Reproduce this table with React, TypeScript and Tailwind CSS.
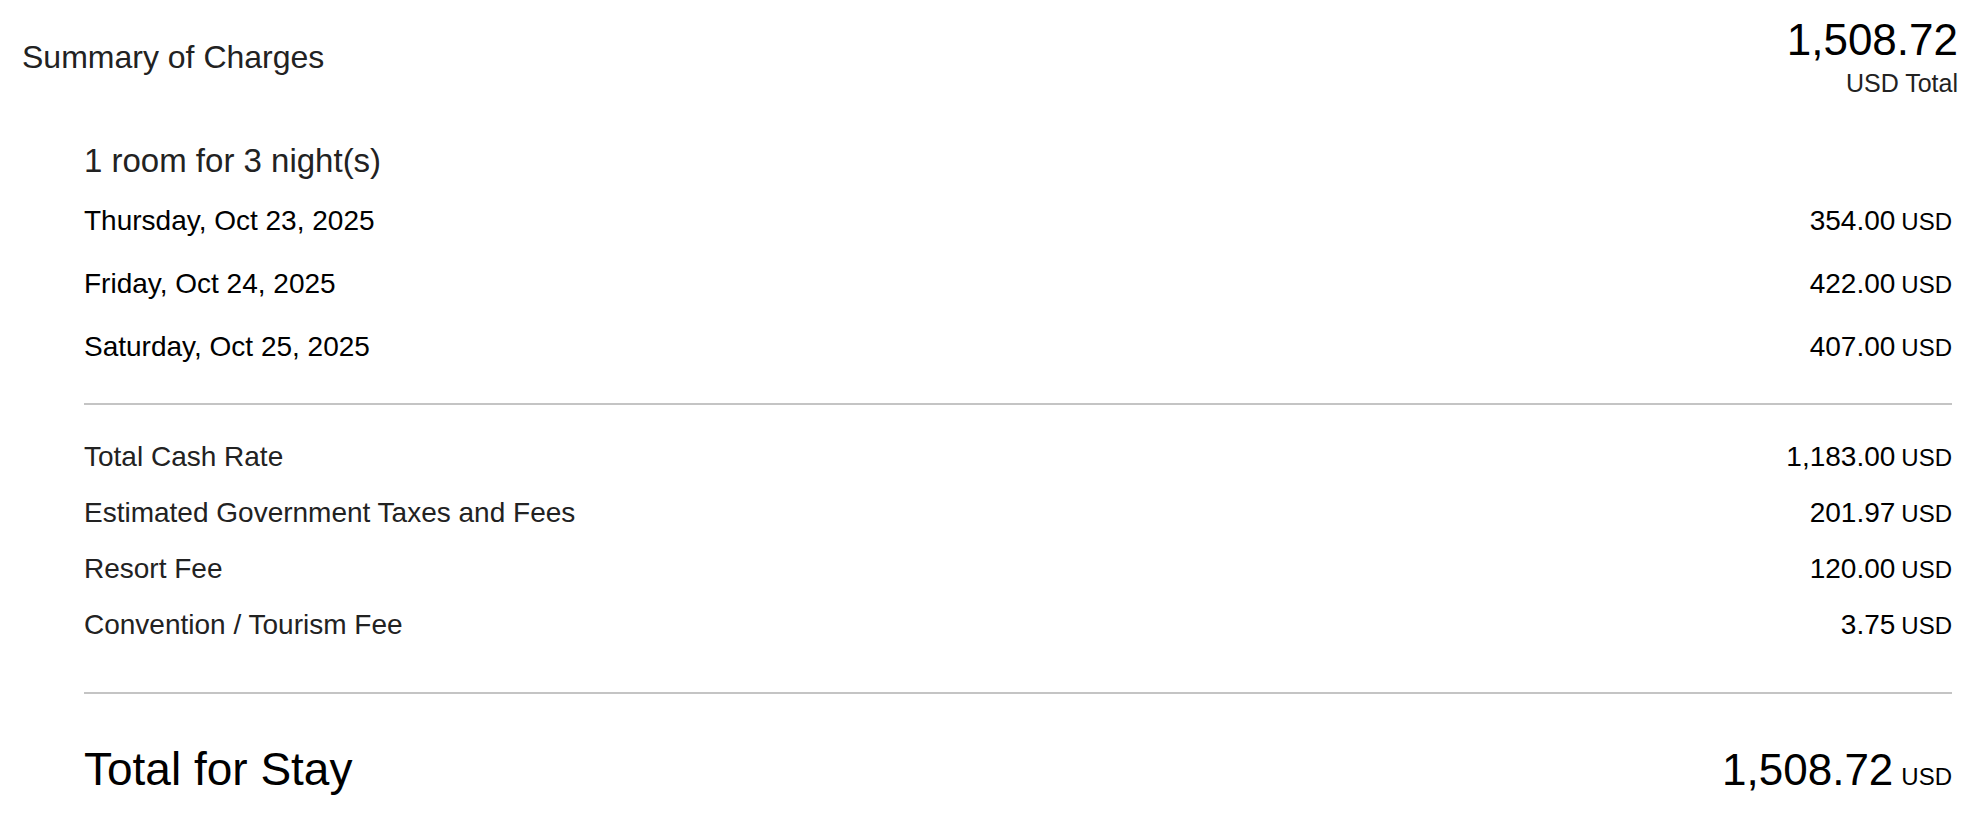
const nights = [
    { date: 'Thursday, Oct 23, 2025', amount: '354.00' },
    { date: 'Friday, Oct 24, 2025', amount: '422.00' },
    { date: 'Saturday, Oct 25, 2025', amount: '407.00' },
];

const charges = [
    { label: 'Total Cash Rate', amount: '1,183.00' },
    { label: 'Estimated Government Taxes and Fees', amount: '201.97' },
    { label: 'Resort Fee', amount: '120.00' },
    { label: 'Convention / Tourism Fee', amount: '3.75' },
];

function Amount({ value }: { value: string }) {
    return (
        <span className="flex items-baseline gap-[6px] text-black">
            <span className="text-[28px]">{value}</span>
            <span className="text-[24px]">USD</span>
        </span>
    );
}

export default function App() {
    return (
        <div className="min-h-screen bg-white font-['Liberation_Sans',Arial,sans-serif]">
            {/* header */}
            <header className="flex items-start justify-between pl-[22px] pr-[26px]">
                <h2 className="pt-[41px] text-[32px] leading-[32px] text-[#222]">
                    Summary of Charges
                </h2>
                <div className="flex flex-col items-end pt-[19px]">
                    <span className="text-[44px] leading-[42px] text-black">1,508.72</span>
                    <span className="mt-[10px] text-[25px] leading-[24px] text-[#222]">USD Total</span>
                </div>
            </header>

            <section className="pl-[84px] pr-[32px]">
                <h3 className="mt-[50px] text-[33px] leading-[32px] text-[#222]">
                    1 room for 3 night(s)
                </h3>

                <div className="mt-[12px]">
                    {nights.map((n) => (
                        <div
                            key={n.date}
                            className="flex h-[63px] items-baseline justify-between text-[28px] leading-[63px] text-black"
                        >
                            <span>{n.date}</span>
                            <Amount value={n.amount} />
                        </div>
                    ))}
                </div>

                <div className="mt-[25px] h-[2px] bg-[#c4c4c4]"></div>

                <div className="mt-[24px]">
                    {charges.map((c) => (
                        <div
                            key={c.label}
                            className="flex h-[56px] items-baseline justify-between text-[28px] leading-[56px] text-[#222]"
                        >
                            <span>{c.label}</span>
                            <Amount value={c.amount} />
                        </div>
                    ))}
                </div>

                <div className="mt-[39px] h-[2px] bg-[#c4c4c4]"></div>

                <div className="mt-[53px] flex items-baseline justify-between leading-[44px] text-black">
                    <span className="text-[46px]">Total for Stay</span>
                    <span className="flex items-baseline gap-[8px]">
                        <span className="text-[44px]">1,508.72</span>
                        <span className="text-[24px]">USD</span>
                    </span>
                </div>
            </section>
        </div>
    );
}
